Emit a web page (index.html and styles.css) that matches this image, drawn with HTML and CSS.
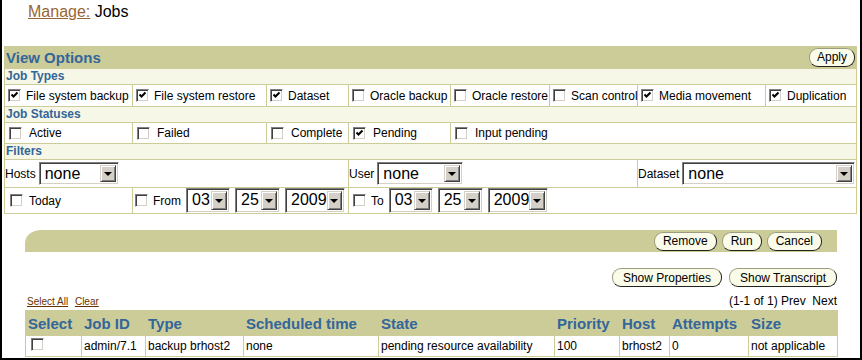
FILE: index.html
```html
<!DOCTYPE html>
<html>
<head>
    <title>Manage: Jobs</title>
    <link rel="stylesheet" href="styles.css">
</head>
<body>
<div class="frame">
    <div class="crumb"><a href="#">Manage:</a> Jobs</div>

    <div class="options">
        <div class="bar">
            <span class="bar-title">View Options</span>
            <button class="btn">Apply</button>
        </div>
        <div class="grid">
            <div class="sub">Job Types</div>
            <div class="cell"><span class="cb on"><svg viewBox="0 0 9 9"><path d="M1.5 3.5 L3.5 5.5 L7.5 1.5"/></svg></span>File system backup</div>
            <div class="cell"><span class="cb on"><svg viewBox="0 0 9 9"><path d="M1.5 3.5 L3.5 5.5 L7.5 1.5"/></svg></span>File system restore</div>
            <div class="cell"><span class="cb on"><svg viewBox="0 0 9 9"><path d="M1.5 3.5 L3.5 5.5 L7.5 1.5"/></svg></span>Dataset</div>
            <div class="cell"><span class="cb"></span>Oracle backup</div>
            <div class="cell"><span class="cb"></span>Oracle restore</div>
            <div class="cell"><span class="cb"></span>Scan control</div>
            <div class="cell"><span class="cb on"><svg viewBox="0 0 9 9"><path d="M1.5 3.5 L3.5 5.5 L7.5 1.5"/></svg></span>Media movement</div>
            <div class="cell"><span class="cb on"><svg viewBox="0 0 9 9"><path d="M1.5 3.5 L3.5 5.5 L7.5 1.5"/></svg></span>Duplication</div>

            <div class="sub">Job Statuses</div>
            <div class="cell status"><span class="cb"></span>Active</div>
            <div class="cell status"><span class="cb"></span>Failed</div>
            <div class="cell status"><span class="cb"></span>Complete</div>
            <div class="cell status"><span class="cb on"><svg viewBox="0 0 9 9"><path d="M1.5 3.5 L3.5 5.5 L7.5 1.5"/></svg></span>Pending</div>
            <div class="cell status span-rest"><span class="cb"></span>Input pending</div>

            <div class="sub">Filters</div>
            <div class="cell filter hosts">Hosts <span class="sel w-host"><span class="val">none</span><span class="arr"></span></span></div>
            <div class="cell filter user">User <span class="sel w-user"><span class="val">none</span><span class="arr"></span></span></div>
            <div class="cell filter dataset">Dataset <span class="sel w-dataset"><span class="val">none</span><span class="arr"></span></span></div>

            <div class="cell date today"><span class="cb"></span>Today</div>
            <div class="cell date from"><span class="cb"></span>From
                <span class="sel w-mm"><span class="val">03</span><span class="arr"></span></span>
                <span class="sel w-dd"><span class="val">25</span><span class="arr"></span></span>
                <span class="sel w-yy"><span class="val">2009</span><span class="arr"></span></span>
            </div>
            <div class="cell date to"><span class="cb"></span>To
                <span class="sel w-mm"><span class="val">03</span><span class="arr"></span></span>
                <span class="sel w-dd"><span class="val">25</span><span class="arr"></span></span>
                <span class="sel w-yy"><span class="val">2009</span><span class="arr"></span></span>
            </div>
        </div>
    </div>

    <div class="jobs">
        <div class="actions">
            <button class="btn">Remove</button>
            <button class="btn">Run</button>
            <button class="btn">Cancel</button>
        </div>
        <div class="tools">
            <button class="btn">Show Properties</button>
            <button class="btn">Show Transcript</button>
        </div>
        <div class="pager">
            <span class="select-links"><a href="#">Select All</a> <a href="#">Clear</a></span>
            <span>(1-1 of 1) Prev&nbsp; Next</span>
        </div>
        <table class="list">
            <colgroup>
                <col style="width:56px"><col style="width:64px"><col style="width:98px">
                <col style="width:135px"><col style="width:176px"><col style="width:65px">
                <col style="width:50px"><col style="width:79px"><col style="width:89px">
            </colgroup>
            <tr>
                <th>Select</th><th>Job ID</th><th>Type</th><th>Scheduled time</th><th>State</th>
                <th>Priority</th><th>Host</th><th>Attempts</th><th>Size</th>
            </tr>
            <tr>
                <td class="pick"><span class="cb"></span></td>
                <td>admin/7.1</td>
                <td>backup brhost2</td>
                <td>none</td>
                <td>pending resource availability</td>
                <td>100</td>
                <td>brhost2</td>
                <td>0</td>
                <td>not applicable</td>
            </tr>
        </table>
    </div>
</div>
</body>
</html>
```

FILE: styles.css
```css
body {
    margin: 0;
    font-family: "Liberation Sans", Arial, sans-serif;
    font-size: 12px;
    background-color: #fff;
}
.frame {
    width: 858px;
    height: 358px;
    border: 2px solid #000;
    border-top: none;
    overflow: hidden;
}
.crumb {
    height: 43px;
    padding: 3px 0 0 26px;
    font-size: 16px;
}
.crumb a {
    color: #996633;
}

/* view options */
.options {
    margin: 0 3px 0 2px;
}
.bar {
    height: 22px;
    background-color: #cccc99;
    display: flex;
    align-items: center;
    justify-content: space-between;
    padding: 0 2px 0 2px;
}
.bar-title {
    color: #336699;
    font-weight: bold;
    font-size: 15px;
}
.grid {
    display: grid;
    grid-template-columns: 127px 133px 81px 101px 98px 87px 127px 90px;
    gap: 1px;
    border: 1px solid #cccc99;
    background-color: #cccc99;
}
.sub {
    grid-column: 1 / -1;
    height: 15px;
    line-height: 15px;
    background-color: #f7f7e7;
    color: #336699;
    font-weight: bold;
    font-size: 12px;
    padding-left: 1px;
}
.cell {
    background-color: #fff;
    height: 21px;
    display: flex;
    align-items: center;
    padding-left: 3px;
    white-space: nowrap;
    font-size: 12px;
}
.cell.status {
    height: 20px;
    padding-left: 4px;
}
.cell.status .cb {
    margin-right: 7px;
}
.span-rest {
    grid-column: 5 / -1;
}
.cell.filter {
    height: 27px;
    padding-left: 0;
}
.hosts { grid-column: 1 / 4; }
.user { grid-column: 4 / 7; }
.dataset { grid-column: 7 / -1; }
.filter .sel {
    margin-left: 3px;
}
.cell.date {
    height: 25px;
}
.today {
    padding-left: 5px;
}
.today .cb {
    margin-right: 6px;
}
.from { grid-column: 2 / 4; padding-left: 2px; }
.to { grid-column: 4 / -1; padding-left: 4px; }
.date .sel {
    margin-left: 5px;
    height: 25px;
}
.from .sel:first-of-type,
.to .sel:first-of-type {
    margin-left: 7px;
}

/* checkbox */
.cb {
    display: inline-block;
    box-sizing: border-box;
    width: 13px;
    height: 13px;
    border: 1px solid;
    border-color: #808080 #fff #fff #808080;
    box-shadow: inset 1px 1px 0 #404040, inset -1px -1px 0 #d4d0c8;
    background-color: #fff;
    margin-right: 5px;
    flex: none;
    position: relative;
}
.cb svg {
    position: absolute;
    left: 1px;
    top: 1px;
    width: 9px;
    height: 9px;
}
.cb path {
    fill: none;
    stroke: #000;
    stroke-width: 2;
}

/* select */
.sel {
    display: inline-flex;
    box-sizing: border-box;
    height: 23px;
    border: 1px solid;
    border-color: #808080 #fff #fff #808080;
    box-shadow: inset 1px 1px 0 #404040, inset -1px -1px 0 #d4d0c8;
    background-color: #fff;
    padding: 2px;
    font-size: 16px;
}
.sel .val {
    flex: 1;
    padding-left: 3px;
    line-height: 17px;
}
.sel .arr {
    box-sizing: border-box;
    width: 16px;
    border: 1px solid;
    border-color: #d4d0c8 #404040 #404040 #d4d0c8;
    box-shadow: inset 1px 1px 0 #fff, inset -1px -1px 0 #808080;
    background-color: #d4d0c8;
    display: flex;
    align-items: center;
    justify-content: center;
}
.sel .arr::after {
    content: "";
    border-left: 4px solid transparent;
    border-right: 4px solid transparent;
    border-top: 4px solid #000;
    margin-top: 1px;
}
.w-host { width: 80px; }
.w-user { width: 86px; }
.w-dataset { width: 173px; }
.w-mm { width: 44px; }
.w-dd { width: 45px; }
.w-yy { width: 60px; }

/* buttons */
.btn {
    font-family: "Liberation Sans", Arial, sans-serif;
    font-size: 12px;
    height: 19px;
    padding: 0 8px;
    border: 1px solid #9c9c80;
    border-right-color: #222;
    border-bottom-color: #222;
    border-radius: 9px;
    background-color: #fbfbea;
    color: #000;
}
.bar .btn {
    padding: 0 7px;
}
.tools .btn {
    padding: 0 10px;
}

/* jobs list */
.jobs {
    margin: 16px 0 0 23px;
    width: 812px;
}
.actions {
    height: 22px;
    background-color: #cccc99;
    border-top-left-radius: 16px 13px;
    display: flex;
    justify-content: flex-end;
    align-items: center;
    gap: 5px;
    padding-right: 15px;
}
.tools {
    margin-top: 16px;
    display: flex;
    justify-content: flex-end;
    gap: 7px;
}
.pager {
    margin-top: 5px;
    height: 18px;
    display: flex;
    justify-content: space-between;
    align-items: center;
    font-size: 12px;
}
.select-links {
    font-size: 10px;
    padding-left: 2px;
}
.select-links a {
    color: #663300;
    margin-right: 4px;
}
.list {
    border-collapse: collapse;
    table-layout: fixed;
    width: 812px;
}
.list th {
    background-color: #cccc99;
    color: #336699;
    font-size: 15px;
    text-align: left;
    height: 24px;
    padding: 0 2px;
    border: 1px solid #cccc99;
    white-space: nowrap;
}
.list td {
    border: 1px solid #cccc99;
    height: 20px;
    padding: 0 2px;
    font-size: 12px;
    white-space: nowrap;
}
.list td.pick {
    padding-left: 5px;
}
```
